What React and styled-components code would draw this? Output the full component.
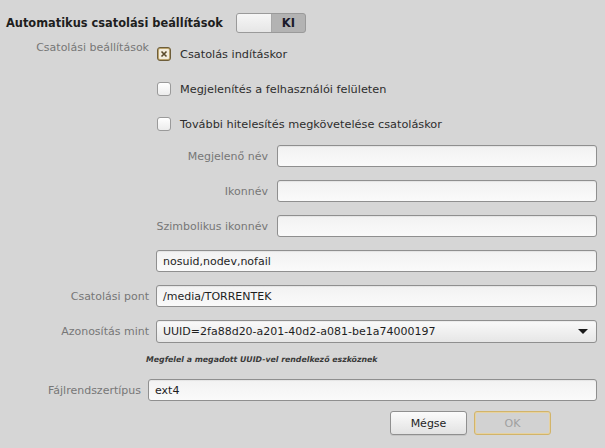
import styled, { createGlobalStyle } from "styled-components";

const Global = createGlobalStyle`
  html, body {
    margin: 0;
    padding: 0;
    background: #d6d6d6;
  }
  body {
    font-family: "DejaVu Sans", Verdana, sans-serif;
    font-size: 11px;
    color: #2d2d2d;
  }
`;

export default function App() {
  return (
    <>
      <Global />
      <Page>
        <Header>
          <Title>Automatikus csatolási beállítások</Title>
          <Switch>
            <Knob />
            <SwitchLabel>KI</SwitchLabel>
          </Switch>
        </Header>

        <Section>
          <Row $gap={8} $top>
            <Label $width={143}>Csatolási beállítások</Label>
            <CheckList>
              <CheckRow>
                <Box $checked>
                  <svg width="8" height="8" viewBox="0 0 8 8">
                    <path d="M1.5 1.5 L6.5 6.5 M6.5 1.5 L1.5 6.5" stroke="#5a4a2a" strokeWidth="1.6" />
                  </svg>
                </Box>
                Csatolás indításkor
              </CheckRow>
              <CheckRow>
                <Box />
                Megjelenítés a felhasználói felületen
              </CheckRow>
              <CheckRow>
                <Box />
                További hitelesítés megkövetelése csatoláskor
              </CheckRow>
            </CheckList>
          </Row>
        </Section>

        <Fields>
          <Row $gap={9}>
            <Label $width={262}>Megjelenő név</Label>
            <Entry />
          </Row>
          <Row $gap={9}>
            <Label $width={262}>Ikonnév</Label>
            <Entry />
          </Row>
          <Row $gap={9}>
            <Label $width={262}>Szimbolikus ikonnév</Label>
            <Entry />
          </Row>
          <Row $gap={7}>
            <Label $width={143} />
            <Entry>nosuid,nodev,nofail</Entry>
          </Row>
          <Row $gap={7}>
            <Label $width={143}>Csatolási pont</Label>
            <Entry>/media/TORRENTEK</Entry>
          </Row>
          <Row $gap={7}>
            <Label $width={143}>Azonosítás mint</Label>
            <Combo>
              UUID=2fa88d20-a201-40d2-a081-be1a74000197
              <Arrow />
            </Combo>
          </Row>
        </Fields>

        <Note>Megfelel a megadott UUID-vel rendelkező eszköznek</Note>

        <Row $gap={7}>
          <Label $width={135}>Fájlrendszertípus</Label>
          <Entry>ext4</Entry>
        </Row>

        <Buttons>
          <Button>Mégse</Button>
          <Button $default disabled>OK</Button>
        </Buttons>
      </Page>
    </>
  );
}

const Page = styled.div`
  width: 605px;
  height: 448px;
  box-sizing: border-box;
  padding: 13px 8px 0 6px;
`;

const Header = styled.div`
  display: flex;
  align-items: center;
  gap: 13px;
`;

const Title = styled.div`
  font-weight: bold;
  font-size: 11.4px;
  color: #1e1e1e;
`;

const Switch = styled.div`
  display: flex;
  width: 70px;
  height: 20px;
  box-sizing: border-box;
  border: 1px solid #9a9a9a;
  border-radius: 3px;
  background: #b3b3b3;
  overflow: hidden;
`;

const Knob = styled.div`
  width: 34px;
  background: linear-gradient(#f6f6f6, #e6e6e6);
  border-right: 1px solid #a8a8a8;
`;

const SwitchLabel = styled.div`
  flex: 1;
  display: flex;
  align-items: center;
  justify-content: center;
  font-weight: bold;
  font-size: 11.5px;
  color: #1a1a2a;
`;

const Section = styled.div`
  margin-top: 8px;
`;

const Row = styled.div`
  display: flex;
  align-items: ${(p) => (p.$top ? "flex-start" : "center")};
  gap: ${(p) => p.$gap}px;
`;

const Label = styled.div`
  flex: none;
  width: ${(p) => p.$width}px;
  text-align: right;
  color: #777777;
  white-space: nowrap;
`;

const CheckList = styled.div`
  display: flex;
  flex-direction: column;
  gap: 21px;
  margin-top: 6px;
`;

const CheckRow = styled.div`
  display: flex;
  align-items: center;
  gap: 9px;
  height: 14px;
  font-size: 11.3px;
`;

const Box = styled.div`
  flex: none;
  width: 14px;
  height: 14px;
  box-sizing: border-box;
  border-radius: 3px;
  border: 1px solid ${(p) => (p.$checked ? "#6d5d3a" : "#9a9a9a")};
  background: ${(p) => (p.$checked ? "#bba36c" : "linear-gradient(#ffffff, #ececec)")};
  display: flex;
  align-items: center;
  justify-content: center;

  svg {
    background: #f2ecdc;
    border-radius: 1px;
    padding: 1px;
  }
`;

const Fields = styled.div`
  display: flex;
  flex-direction: column;
  gap: 13px;
  margin-top: 14px;
`;

const Entry = styled.div`
  flex: 1;
  height: 22px;
  box-sizing: border-box;
  border: 1px solid #8f8f8f;
  border-radius: 3px;
  background: linear-gradient(#f2f2f2, #fafafa);
  box-shadow: inset 0 1px 1px rgba(0, 0, 0, 0.06);
  padding: 0 6px;
  display: flex;
  align-items: center;
  color: #1e1e1e;
  white-space: nowrap;
`;

const Combo = styled(Entry)`
  height: 23px;
  background: linear-gradient(#fafafa, #e6e6e6);
  justify-content: space-between;
  padding: 0 8px 0 6px;
`;

const Arrow = styled.span`
  width: 0;
  height: 0;
  border-left: 5px solid transparent;
  border-right: 5px solid transparent;
  border-top: 5px solid #1a1a1a;
`;

const Note = styled.div`
  margin: 11px 0 13px 140px;
  font-size: 7.8px;
  font-style: italic;
  font-weight: bold;
  color: #3a3a3a;
  line-height: 12px;
`;

const Buttons = styled.div`
  display: flex;
  justify-content: flex-end;
  gap: 7px;
  margin-top: 10px;
  padding-right: 46px;
`;

const Button = styled.button`
  width: 77px;
  height: 24px;
  box-sizing: border-box;
  border-radius: 3px;
  font-family: inherit;
  font-size: 11px;
  border: 1px solid ${(p) => (p.$default ? "#d2b46a" : "#8f8f8f")};
  background: ${(p) => (p.$default ? "#d2d2d2" : "linear-gradient(#fbfbfb, #e2e2e2)")};
  color: ${(p) => (p.$default ? "#a0a0a0" : "#1e1e1e")};
  box-shadow: ${(p) => (p.$default ? "inset 0 0 0 1px #e6d2a0" : "0 1px 0 rgba(0,0,0,0.08)")};
`;
